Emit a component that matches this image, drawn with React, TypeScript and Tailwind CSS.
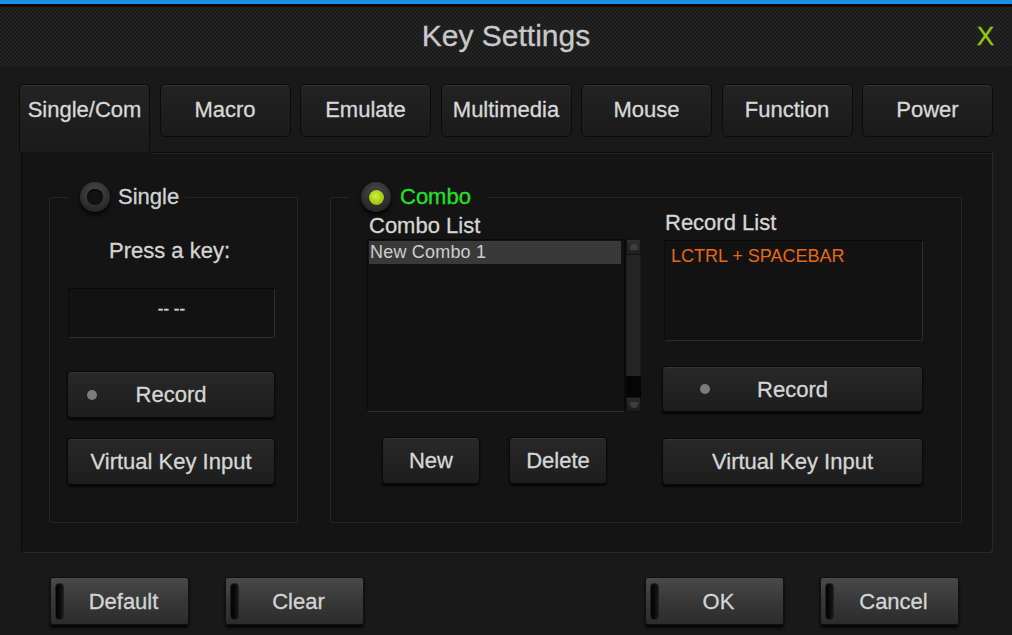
import React from 'react';

const font = "font-['Liberation_Sans',Arial,sans-serif]";

function Radio({ active }: { active?: boolean }) {
  return (
    <span className="w-[30px] h-[30px] rounded-full bg-[radial-gradient(circle_at_50%_35%,#4c4c4c,#262626_75%)] shadow-[0_3px_4px_rgba(0,0,0,0.85)] flex items-center justify-center shrink-0">
      {active ? (
        <span className="w-[15px] h-[15px] rounded-full bg-[radial-gradient(circle_at_45%_40%,#d4ee3a,#8fbf06_80%)] shadow-[0_0_2px_rgba(0,0,0,0.8)]" />
      ) : (
        <span className="w-[16px] h-[16px] rounded-full bg-[#131313] shadow-[inset_0_1px_2px_rgba(0,0,0,0.9)]" />
      )}
    </span>
  );
}

function DarkButton({
  label,
  className = '',
  dot,
}: {
  label: string;
  className?: string;
  dot?: string;
}) {
  return (
    <button
      className={`relative flex items-center justify-center rounded-[4px] border border-[#090909] bg-[linear-gradient(#282828,#1d1d1d)] shadow-[inset_0_1px_0_#353535,0_2px_2px_rgba(0,0,0,0.7)] text-[22px] leading-[25px] text-[#d6d6d6] ${className}`}
    >
      {dot && <span className={`absolute top-1/2 -translate-y-1/2 w-[10px] h-[10px] rounded-full bg-[#7c7c7c] ${dot}`} />}
      {label}
    </button>
  );
}

function FooterButton({ label }: { label: string }) {
  return (
    <button className="relative w-[139px] h-[48px] rounded-[3px] border border-[#111] bg-[linear-gradient(#4a4a4a,#393939_45%,#2c2c2c)] shadow-[0_3px_3px_rgba(0,0,0,0.8)] flex items-center justify-center pl-[8px] text-[22px] leading-[25px] text-[#d4d4d4]">
      <span className="absolute left-[4px] top-[5px] w-[9px] h-[37px] rounded-[4px] bg-[linear-gradient(90deg,#020202,#0c0c0c_60%,#1a1a1a)] border border-[#222]" />
      {label}
    </button>
  );
}

export default function App() {
  const tabs = ['Single/Com', 'Macro', 'Emulate', 'Multimedia', 'Mouse', 'Function', 'Power'];

  return (
    <div className={`w-[1012px] h-[635px] bg-[#191919] flex flex-col overflow-hidden [-webkit-text-stroke:0.3px_currentColor] ${font}`}>
      {/* Title bar */}
      <div className="h-[4px] bg-[#1b8fe0] shrink-0" />
      <div className="h-[3px] bg-[#0a0a0a] shrink-0" />
      <div className="h-[59px] shrink-0 relative flex items-center justify-center bg-[repeating-conic-gradient(#232323_0_25%,#1b1b1b_0_50%)] bg-[length:4px_4px]">
        <span className="text-[30px] leading-[34px] text-[#c9c9c9] -mt-[1px]">Key Settings</span>
        <span className="absolute right-[18px] top-[14px] text-[26px] leading-[30px] text-[#93c61a]">X</span>
      </div>

      {/* Tabs */}
      <div className="flex items-start gap-[9.5px] pl-[19px] mt-[18px] h-[68px] shrink-0">
        {tabs.map((t, i) => (
          <div
            key={t}
            className={`w-[131px] flex justify-center text-[22px] leading-[25px] text-[#d8d8d8] border border-[#0b0b0b] bg-[linear-gradient(#232323,#1a1a1a)] shadow-[inset_0_1px_0_#333] ${
              i === 0
                ? 'h-[69px] rounded-t-[5px] border-b-0 pt-[12px] bg-[linear-gradient(#202020,#161616_60%,#141414)] shadow-[inset_0_1px_0_#333,inset_-1px_0_0_#2a2a2a]'
                : 'h-[53px] rounded-[5px] items-center pb-[2px]'
            }`}
          >
            {t}
          </div>
        ))}
      </div>

      {/* Panel */}
      <div className="ml-[21px] w-[972px] h-[401px] shrink-0 flex flex-col bg-[#141414] border-l border-[#0b0b0b] border-r border-r-[#2a2a2a] border-b border-b-[#2a2a2a] rounded-b-[4px]">
        <div className="h-[2px] ml-[130px] bg-[#0b0b0b] border-b border-[#222] shrink-0" />
        <div className="flex mt-[43px] ml-[27px] gap-[32px]">
          {/* Single group */}
          <div className="w-[249px] h-[326px] border border-[#262626] rounded-[2px] flex flex-col">
            <div className="-mt-[16px] ml-[18px] self-start bg-[#141414] pl-[12px] pr-[6px] h-[30px] flex items-center gap-[8px]">
              <Radio />
              <span className="text-[22px] leading-[25px] text-[#d2d2d2] -mt-[2px]">Single</span>
            </div>
            <div className="mt-[26px] text-center text-[22px] leading-[25px] text-[#d4d4d4] pr-[8px]">Press a key:</div>
            <div className="mt-[25px] ml-[18px] w-[207px] h-[50px] rounded-[2px] bg-[#121212] border border-[#2c2c2c] border-t-[#080808] border-l-[#0c0c0c] flex items-center justify-center pb-[9px] text-[17px] leading-[20px] text-[#cfcfcf]">
              -- --
            </div>
            <DarkButton label="Record" dot="left-[19px]" className="mt-[33px] ml-[17px] w-[208px] h-[47px]" />
            <DarkButton label="Virtual Key Input" className="mt-[20px] ml-[17px] w-[208px] h-[47px]" />
          </div>

          {/* Combo group */}
          <div className="w-[632px] h-[326px] border border-[#262626] rounded-[2px] flex flex-col">
            <div className="-mt-[16px] ml-[18px] self-start bg-[#141414] pl-[12px] pr-[16px] h-[30px] flex items-center gap-[9px]">
              <Radio active />
              <span className="text-[22px] leading-[25px] text-[#25e025] -mt-[2px]">Combo</span>
            </div>
            <div className="flex ml-[36px] gap-[21px]">
              {/* Combo list column */}
              <div className="w-[274px] flex flex-col">
                <div className="h-[27px] text-[22px] text-[#d6d6d6] ml-[2px] leading-[27px]">Combo List</div>
                <div className="flex h-[173px]">
                  <div className="w-[258px] h-full bg-[#121212] border border-[#0a0a0a] border-b-[#2e2e2e] pt-[1px] px-[1px]">
                    <div className="h-[23px] w-[252px] bg-[#393939] text-[18px] text-[#cdcdcd] leading-[22px] pl-[1px] [-webkit-text-stroke:0px] tracking-[0.2px]">
                      New Combo 1
                    </div>
                  </div>
                  <div className="w-[16px] h-full flex flex-col bg-[#222] border-l border-[#0c0c0c]">
                    <div className="h-[16px] bg-[linear-gradient(#2e2e2e,#1e1e1e)] border border-[#111] flex items-center justify-center">
                      <span className="w-[8px] h-[6px] rounded-t-full bg-[#3e3e3e]" />
                    </div>
                    <div className="flex-1 bg-[#252525] border-x border-[#1a1a1a]" />
                    <div className="h-[21px] bg-[#050505]" />
                    <div className="h-[15px] bg-[linear-gradient(#2a2a2a,#1c1c1c)] border border-[#111] flex items-center justify-center">
                      <span className="w-[8px] h-[6px] rounded-b-full bg-[#3e3e3e]" />
                    </div>
                  </div>
                </div>
                <div className="flex mt-[25px] ml-[15px] gap-[29px]">
                  <DarkButton label="New" className="w-[98px] h-[47px]" />
                  <DarkButton label="Delete" className="w-[98px] h-[47px]" />
                </div>
              </div>

              {/* Record list column */}
              <div className="w-[261px] flex flex-col">
                <div className="h-[27px] -mt-[3px] mb-[4px] text-[22px] text-[#d6d6d6] ml-[3px] leading-[27px]">Record List</div>
                <div className="ml-[2px] w-[259px] h-[101px] rounded-[2px] bg-[#121212] border border-[#2c2c2c] border-t-[#080808] border-l-[#0c0c0c] pl-[6px] pt-[3px] text-[18px] text-[#e8680c] leading-[24px] [-webkit-text-stroke:0px]">
                  LCTRL + SPACEBAR
                </div>
                <DarkButton label="Record" dot="left-[37px]" className="mt-[25px] w-[261px] h-[46px]" />
                <DarkButton label="Virtual Key Input" className="mt-[26px] w-[261px] h-[47px]" />
              </div>
            </div>
          </div>
        </div>
      </div>

      {/* Footer */}
      <div className="flex justify-between mt-[24px] pl-[50px] pr-[53px]">
        <div className="flex gap-[36px]">
          <FooterButton label="Default" />
          <FooterButton label="Clear" />
        </div>
        <div className="flex gap-[36px]">
          <FooterButton label="OK" />
          <FooterButton label="Cancel" />
        </div>
      </div>
    </div>
  );
}
